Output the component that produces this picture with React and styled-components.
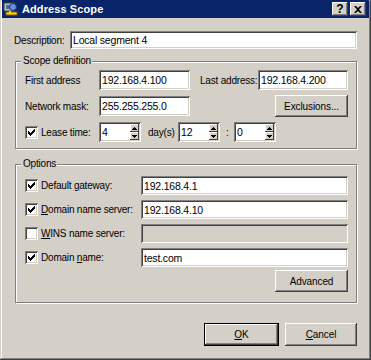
import React from 'react';
import styled, { createGlobalStyle } from 'styled-components';

const GlobalStyle = createGlobalStyle`
  html, body {
    margin: 0;
    padding: 0;
    background: #d4d0c8;
  }
  * { box-sizing: border-box; }
`;

const Window = styled.div`
  width: 371px;
  height: 360px;
  background: #d4d0c8;
  font-family: "Liberation Sans", Arial, sans-serif;
  font-size: 10px;
  color: #000;
  display: flex;
  flex-direction: column;
  box-shadow: inset -1px -1px #404040, inset 1px 1px #d4d0c8, inset -2px -2px #808080, inset 2px 2px #fff;
  overflow: hidden;
`;

const TitleBar = styled.div`
  height: 18px;
  margin: 0 2px 0 2px;
  background: #0a246a;
  display: flex;
  align-items: center;
  padding: 0 3px 0 1px;
`;

const TitleText = styled.div`
  flex: 1;
  color: #fff;
  font-weight: bold;
  font-size: 11px;
  margin-left: 3px;
  letter-spacing: 0.1px;
`;

const CaptionButton = styled.div`
  width: 16px;
  height: 14px;
  margin-left: ${p => p.gap || 0}px;
  background: #d4d0c8;
  box-shadow: inset -1px -1px #404040, inset 1px 1px #fff, inset -2px -2px #808080;
  display: flex;
  align-items: center;
  justify-content: center;
  font-weight: bold;
  font-size: 12px;
  line-height: 1;
`;

const Content = styled.div`
  flex: 1;
  display: flex;
  flex-direction: column;
  padding: 0 14px 0 15px;
`;

const Row = styled.div`
  display: flex;
  align-items: center;
  height: ${p => p.h || 20}px;
  margin-top: ${p => p.mt || 0}px;
`;

const Label = styled.span`
  width: ${p => p.w}px;
  flex: none;
  white-space: nowrap;
  padding-left: ${p => p.pl || 0}px;
  margin-left: ${p => p.ml || 0}px;
  letter-spacing: -0.2px;
  u { text-decoration: underline; text-underline-offset: 1px; }
`;

const Field = styled.div`
  width: ${p => p.w}px;
  height: ${p => p.h || 20}px;
  flex: none;
  background: ${p => (p.disabled ? '#d4d0c8' : '#fff')};
  box-shadow: inset 1px 1px #808080, inset -1px -1px #fff, inset 2px 2px #404040, inset -2px -2px #d4d0c8;
  padding: 0 3px;
  display: flex;
  align-items: center;
  font-size: 10.5px;
  letter-spacing: -0.2px;
`;

const Group = styled.div`
  position: relative;
  margin-top: ${p => p.mt}px;
  height: ${p => p.h}px;
  border: 1px solid #808080;
  box-shadow: 1px 1px 0 #fff, inset 1px 1px 0 #fff;
  padding: ${p => p.pt}px 8px 0 9px;
  display: flex;
  flex-direction: column;
`;

const Legend = styled.span`
  position: absolute;
  top: -7px;
  left: 5px;
  padding: 0 1px 0 2px;
  background: #d4d0c8;
  letter-spacing: -0.2px;
`;

const Button = styled.div`
  width: ${p => p.w}px;
  height: ${p => p.h || 22}px;
  margin-left: ${p => p.ml || 0}px;
  margin-top: ${p => p.mt || 0}px;
  flex: none;
  background: #d4d0c8;
  display: flex;
  align-items: center;
  justify-content: center;
  letter-spacing: -0.1px;
  box-shadow: ${p => (p.primary
    ? 'inset 0 0 0 1px #000, inset -2px -2px #404040, inset 2px 2px #fff, inset -3px -3px #808080'
    : 'inset -1px -1px #404040, inset 1px 1px #fff, inset -2px -2px #808080')};
  u { text-decoration: underline; text-underline-offset: 1px; }
`;

const Spacer = styled.div`
  flex: 1;
`;

const Check = styled.div`
  width: 13px;
  height: 13px;
  flex: none;
  margin-right: 3px;
  background: #fff;
  box-shadow: inset 1px 1px #808080, inset -1px -1px #fff, inset 2px 2px #404040, inset -2px -2px #d4d0c8;
  display: flex;
  align-items: center;
  justify-content: center;
`;

const SpinWrap = styled(Field)`
  width: 42px;
  padding: 2px 2px 2px 3px;
  justify-content: space-between;
`;

const SpinButtons = styled.div`
  width: 9px;
  height: 100%;
  display: flex;
  flex-direction: column;
`;

const SpinArrow = styled.div`
  flex: 1;
  background: #d4d0c8;
  box-shadow: inset -1px -1px #404040, inset 1px 1px #fff;
  display: flex;
  align-items: center;
  justify-content: center;
`;

const Footer = styled.div`
  display: flex;
  justify-content: flex-end;
  margin-top: 20px;
`;

const CheckMark = () => (
  <svg width="7" height="7" viewBox="0 0 7 7">
    <path d="M0 2h1v1h1v1h1v-1h1v-1h1v-1h1v-1h1v3h-1v1h-1v1h-1v1h-1v1h-1v-1h-1v-1h-1z" fill="#000" />
  </svg>
);

const Arrow = ({ up }) => (
  <svg width="5" height="3" viewBox="0 0 5 3">
    <path d={up ? 'M2 0h1v1h1v1h1v1h-5v-1h1v-1h1z' : 'M0 0h5v1h-1v1h-1v1h-1v-1h-1v-1h-1z'} fill="#000" />
  </svg>
);

const CheckBox = ({ checked }) => <Check>{checked && <CheckMark />}</Check>;

const Spin = ({ value }) => (
  <SpinWrap>
    <span>{value}</span>
    <SpinButtons>
      <SpinArrow><Arrow up /></SpinArrow>
      <SpinArrow><Arrow /></SpinArrow>
    </SpinButtons>
  </SpinWrap>
);

const ScopeIcon = () => (
  <svg width="16" height="16" viewBox="0 0 16 16">
    <rect x="1" y="2" width="10" height="8" fill="#c0c0c0" stroke="#404040" />
    <rect x="3" y="4" width="6" height="4" fill="#3a6ea5" />
    <circle cx="10" cy="6" r="3.5" fill="#6a8fd6" stroke="#203080" />
    <rect x="3" y="11" width="11" height="3" fill="#ffd800" stroke="#806000" />
    <rect x="6" y="10" width="2" height="2" fill="#ffd800" />
  </svg>
);

const CloseGlyph = () => (
  <svg width="8" height="7" viewBox="0 0 8 7">
    <path d="M0 0h2l2 2 2-2h2l-3 3.5 3 3.5h-2l-2-2-2 2h-2l3-3.5z" fill="#000" />
  </svg>
);

const OptionRow = ({ checked, label, value, disabled, mt }) => (
  <Row h={19} mt={mt}>
    <CheckBox checked={checked} />
    <Label w={100}>{label}</Label>
    <Field w={207} h={19} disabled={disabled}>{value}</Field>
  </Row>
);

export default function App() {
  return (
    <>
      <GlobalStyle />
      <Window>
        <TitleBar>
          <ScopeIcon />
          <TitleText>Address Scope</TitleText>
          <CaptionButton>?</CaptionButton>
          <CaptionButton gap={2}><CloseGlyph /></CaptionButton>
        </TitleBar>
        <Content>
          <Row h={18} mt={13}>
            <Label w={56} ml={-1}>Description:</Label>
            <Field w={287} h={18}>Local segment 4</Field>
          </Row>

          <Group mt={12} h={88} pt={8}>
            <Legend>Scope definition</Legend>
            <Row>
              <Label w={74}>First address</Label>
              <Field w={91}>192.168.4.100</Field>
              <Label w={58} ml={10}>Last address:</Label>
              <Field w={90}>192.168.4.200</Field>
            </Row>
            <Row mt={6}>
              <Label w={74}>Network mask:</Label>
              <Field w={91}>255.255.255.0</Field>
              <Spacer />
              <Button w={73}>Exclusions...</Button>
            </Row>
            <Row mt={6}>
              <CheckBox checked />
              <Label w={58}>Lease time:</Label>
              <Spin value="4" />
              <Label w={37} pl={7}>day(s)</Label>
              <Spin value="12" />
              <Label w={14} pl={6}>:</Label>
              <Spin value="0" />
            </Row>
          </Group>

          <Group mt={15} h={139} pt={11}>
            <Legend>Options</Legend>
            <OptionRow checked label={<>Default <u>g</u>ateway:</>} value="192.168.4.1" />
            <OptionRow checked mt={5} label={<><u>D</u>omain name server:</>} value="192.168.4.10" />
            <OptionRow mt={5} disabled label={<><u>W</u>INS name server:</>} value="" />
            <OptionRow checked mt={5} label={<>Domain <u>n</u>ame:</>} value="test.com" />
            <Row h={22} mt={3}>
              <Spacer />
              <Button w={73}>Advanced</Button>
            </Row>
          </Group>

          <Footer>
            <Button w={75} h={23} primary><u>O</u>K</Button>
            <Button w={72} h={23} ml={6}><u>C</u>ancel</Button>
          </Footer>
        </Content>
      </Window>
    </>
  );
}
